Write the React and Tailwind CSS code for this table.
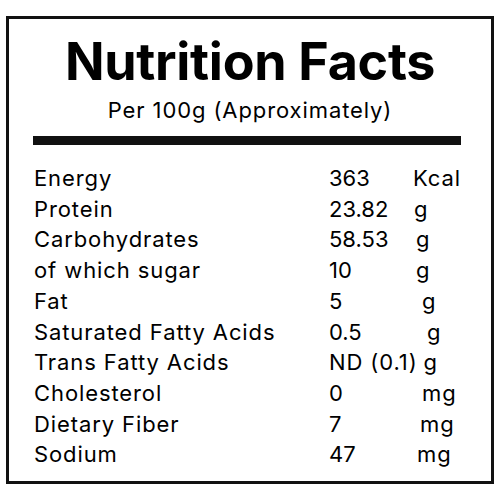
import React from 'react';

const rows = [
  { label: 'Energy', value: '363', unit: 'Kcal', pad: 'pl-0' },
  { label: 'Protein', value: '23.82', unit: 'g', pad: 'pl-[1px]' },
  { label: 'Carbohydrates', value: '58.53', unit: 'g', pad: 'pl-[3px]' },
  { label: 'of which sugar', value: '10', unit: 'g', pad: 'pl-[3px]' },
  { label: 'Fat', value: '5', unit: 'g', pad: 'pl-[9px]' },
  { label: 'Saturated Fatty Acids', value: '0.5', unit: 'g', pad: 'pl-[14px]' },
  { label: 'Trans Fatty Acids', value: 'ND (0.1)', unit: 'g', wide: true },
  { label: 'Cholesterol', value: '0', unit: 'mg', pad: 'pl-[9px]' },
  { label: 'Dietary Fiber', value: '7', unit: 'mg', pad: 'pl-[7px]' },
  { label: 'Sodium', value: '47', unit: 'mg', pad: 'pl-[4px]' },
];

export default function App() {
  return (
    <div className="w-[500px] h-[500px] bg-white pt-[16px] pl-[6px]" style={{ fontFamily: 'Inter, "Noto Sans", sans-serif' }}>
      <div className="w-[488px] h-[468px] border-[3px] border-[#111] text-black">
        <h1 className="text-center text-[52px] font-bold leading-[60px] tracking-[-0.3px] mt-[13px]">Nutrition Facts</h1>
        <p className="text-center text-[22px] leading-[28px] tracking-[0.9px] mt-[4px]">Per 100g (Approximately)</p>
        <div className="ml-[24px] w-[428px] h-[9px] bg-[#111] mt-[12px]" />
        <div className="pl-[25px] mt-[18px] text-[22px] leading-[30.7px] tracking-[0.9px]">
          {rows.map((r) => (
            <div key={r.label} className="grid grid-cols-[295px_84px_1fr] whitespace-nowrap">
              <span>{r.label}</span>
              {r.wide ? (
                <span className="col-span-2 flex gap-[6px]">
                  <span>{r.value}</span>
                  <span>{r.unit}</span>
                </span>
              ) : (
                <>
                  <span className="tracking-[0px]">{r.value}</span>
                  <span className={r.pad}>{r.unit}</span>
                </>
              )}
            </div>
          ))}
        </div>
      </div>
    </div>
  );
}
